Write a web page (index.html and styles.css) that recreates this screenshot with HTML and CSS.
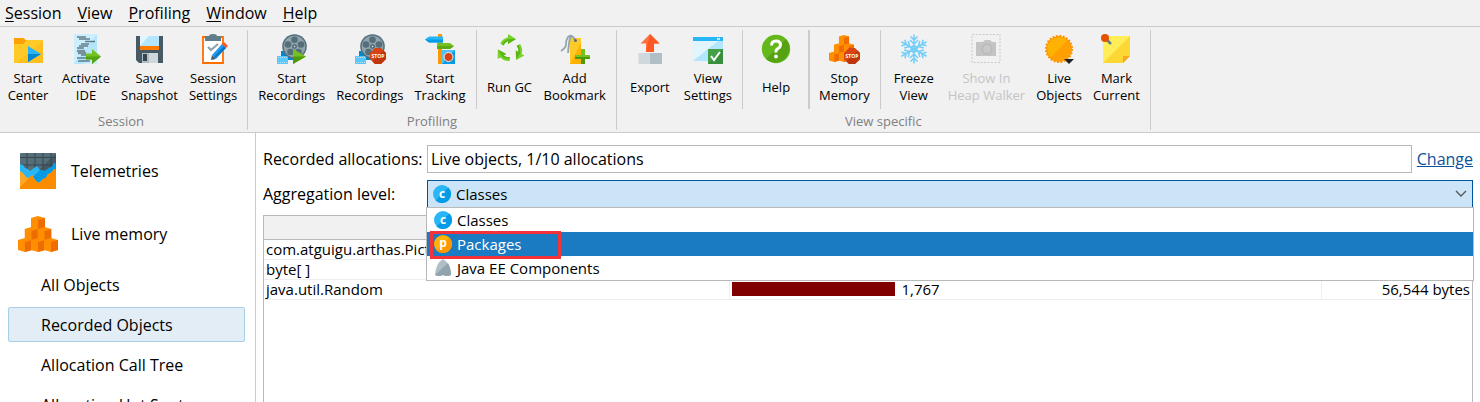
FILE: index.html
```html
<!DOCTYPE html>
<html lang="en">
<head>
<meta charset="utf-8">
<title>Recorded Objects</title>
<link rel="stylesheet" href="styles.css">
</head>
<body>
<svg class="defs" aria-hidden="true">
  <defs>
    <symbol id="reel" viewBox="0 0 30 30">
      <path d="M4 17h12v9H4z" fill="#0288d1"/>
      <path d="M0 22h11v8H0z" fill="#5ac8fa"/>
      <path d="M1 23.500h9M1 28.500h9" stroke="#b3e5fc" stroke-dasharray="1 1"/>
      <circle cx="17.500" cy="12.500" r="12.300" fill="#546e7a"/>
      <circle cx="17.500" cy="12.500" r="10.800" fill="#90a4ae"/>
      <g fill="#546e7a"><circle cx="17.500" cy="5.800" r="3.300"/><circle cx="24" cy="10.500" r="3.300"/><circle cx="21.500" cy="18" r="3.300"/><circle cx="13.500" cy="18" r="3.300"/><circle cx="11" cy="10.500" r="3.300"/></g>
      <circle cx="17.500" cy="12.500" r="2.300" fill="#455a64"/><circle cx="17.500" cy="12.500" r="1" fill="#cfd8dc"/>
    </symbol>
    <symbol id="stop" viewBox="0 0 16 16">
      <path d="M5 0h6l5 5v6l-5 5H5l-5-5V5z" fill="#d84315"/>
      <path d="M16 5v6l-5 5H5l-2.500-2.500L13.500 2.500z" fill="#bf360c"/>
      <text x="8" y="10" text-anchor="middle" class="stop-text">STOP</text>
    </symbol>
    <symbol id="cube" viewBox="0 0 14 14">
      <path d="M7 0l7 2v10l-7 2-7-2V2z" fill="#ff8f00"/>
      <path d="M7 4l7-2v10l-7 2z" fill="#ef6c00"/>
    </symbol>
    <symbol id="cubes" viewBox="0 0 40 36">
      <use href="#cube" x="13" y="0" width="14" height="14"/>
      <use href="#cube" x="6.500" y="11" width="14" height="14"/><use href="#cube" x="19.500" y="11" width="14" height="14"/>
      <use href="#cube" x="0" y="22" width="14" height="14"/><use href="#cube" x="13" y="22" width="14" height="14"/><use href="#cube" x="26" y="22" width="14" height="14"/>
    </symbol>
    <symbol id="class-icon" viewBox="0 0 18 18">
      <circle cx="9" cy="9" r="9" fill="#29b6f6"/><path d="M15.400 2.600A9 9 0 0 1 2.600 15.400z" fill="#039be5"/>
      <text x="9" y="12.500" text-anchor="middle" class="badge-text">c</text>
    </symbol>
    <symbol id="arc" viewBox="0 0 30 30">
      <path d="M5.300 9.500A11.500 11.500 0 0 1 13 3.200V0l8 5-8 5V7a8.500 8.500 0 0 0-4.500 4.500z" fill="#76d22b"/>
      <path d="M13 5h8l-8 5V7q-3 1-4.500 4.500l-1.600-1Q9 6.500 13 5z" fill="#5cb615"/>
    </symbol>
    <g id="flake-arm"><path d="M15 15V0.500M15 6l-3.500-3.500M15 6l3.500-3.500M15 10l-4-4M15 10l4-4"/></g>
  </defs>
</svg>

<nav class="menu" aria-label="Main menu">
  <button><u>S</u>ession</button><button><u>V</u>iew</button><button><u>P</u>rofiling</button><button><u>W</u>indow</button><button><u>H</u>elp</button>
</nav>

<header class="toolbar">
  <section class="group">
    <div class="tools">
      <button class="tool">
        <svg class="icon" viewBox="0 0 30 30"><path d="M1 4h10l2 2h17v23H1z" fill="#ffca28"/><path d="M30 7v22H4z" fill="#ffc01e"/><path d="M1 4h9l3 3-3 3H1z" fill="#ffa000"/><path d="M15 12l13 8-13 8z" fill="#29b6f6"/><path d="M15 20h13l-13 8z" fill="#0288d1"/></svg>
        <span>Start<br>Center</span></button>
      <button class="tool">
        <svg class="icon" viewBox="0 0 30 30"><path d="M3 0h23v30H3z" fill="#cdeefe"/><path d="M26 0v20L12 30H3z" fill="#b3e5fc"/><path d="M6 3h9M8 5h11M14 7.500h10M10 10h8M8 12h9M6 14h7M10 21h7M6 24h9M7 27h12" stroke="#607d8b" stroke-width="1.300"/><path d="M6 17h8M7 19h8" stroke="#78909c" stroke-width="2.500"/><path d="M15 19.500h6V15l9 7.500-9 7.500v-4.500h-6z" fill="#76c122"/><path d="M15 22.500h15L21 30v-4.500h-6z" fill="#55a312"/></svg>
        <span>Activate<br>IDE</span></button>
      <button class="tool">
        <svg class="icon" viewBox="0 0 30 30"><path d="M2 2h27v27H5l-3-3z" fill="#455a64"/><path d="M6 2h19v10H6z" fill="#e1f5fe"/><path d="M15 2h10v10H6z" fill="#b3e5fc"/><path d="M6 12h19v4H6z" fill="#ff7b00"/><path d="M8 19h16v10H8z" fill="#b0bec5"/><path d="M15 19h9v10h-9z" fill="#cfd8dc"/><path d="M9 20h4v7H9z" fill="#37474f"/></svg>
        <span>Save<br>Snapshot</span></button>
      <button class="tool">
        <svg class="icon" viewBox="0 0 30 30"><path d="M5 3h20v26H5z" fill="#fff" stroke="#ff6f00" stroke-width="1.800"/><path d="M7 7V3q0-1 1-1h3q0-2 4-2t4 2h3q1 0 1 1v4z" fill="#607d8b"/><path d="M10 13l3 3 7-6" fill="none" stroke="#90a4ae" stroke-width="2.300"/><path d="M13 26l1-5 4 4z" fill="#455a64"/><path d="M14 21L24 10l4 4-10 11z" fill="#2196f3"/><path d="M17 24l11-10-2-2-10 11z" fill="#0277bd"/><path d="M24 10l2-2 4 4-2 2z" fill="#ff5722"/></svg>
        <span>Session<br>Settings</span></button>
    </div>
    <h2>Session</h2>
  </section>
  <section class="group">
    <div class="tools">
      <button class="tool">
        <svg class="icon" viewBox="0 0 30 30"><use href="#reel" width="30" height="30"/><path d="M16 15l13 7.500L16 30z" fill="#76c122"/><path d="M16 22.500h13L16 30z" fill="#4e9a0a"/></svg>
        <span>Start<br>Recordings</span></button>
      <button class="tool">
        <svg class="icon" viewBox="0 0 30 30"><use href="#reel" width="30" height="30"/><use href="#stop" x="15" y="14" width="16" height="16"/></svg>
        <span>Stop<br>Recordings</span></button>
      <button class="tool">
        <svg class="icon" viewBox="0 0 30 30"><path d="M13 0h4v30h-4z" fill="#ff9800"/><path d="M0 5.500l4-3h14v6H4z" fill="#29b6f6"/><path d="M0 5.500h18v3H4z" fill="#039be5"/><path d="M12 9h13l4 3-4 3H12z" fill="#76c122"/><path d="M12 12h17l-4 3H12z" fill="#5cab14"/><path d="M17 16h13v14H17z" fill="#039be5"/><path d="M17 16h13L17 30z" fill="#4fc3f7"/><circle cx="23.500" cy="23" r="4.500" fill="#d84315" stroke="#eceff1"/></svg>
        <span>Start<br>Tracking</span></button>
      <i class="sep"></i>
      <button class="tool">
        <svg class="icon" viewBox="0 0 30 30"><use href="#arc" width="30" height="30"/><use href="#arc" width="30" height="30" transform="rotate(120 15 15.500)"/><use href="#arc" width="30" height="30" transform="rotate(240 15 15.500)"/></svg>
        <span>Run GC</span></button>
      <button class="tool">
        <svg class="icon" viewBox="0 0 30 30"><path d="M10 4h11v26H10z" fill="#ffca28"/><path d="M21 9v21H10z" fill="#ffb300"/><path d="M16 7Q12-1 8 3 6 6 6 10T1 17M15 7Q13 0 10 4 9 8 8 19" fill="none" stroke="#90a4ae" stroke-width="1.800"/><circle cx="15.500" cy="6.500" r="1.500" fill="#546e7a"/><path d="M21 15h4v6h5v4h-5v5h-4v-5h-6v-4h6z" fill="#76c122"/><path d="M15 23h15v2h-5v5h-4v-5h-6z" fill="#4e9a0a"/></svg>
        <span>Add<br>Bookmark</span></button>
    </div>
    <h2>Profiling</h2>
  </section>
  <section class="group">
    <div class="tools">
      <button class="tool">
        <svg class="icon" viewBox="0 0 30 30"><path d="M3.500 19H27v11H3.500z" fill="#cfd8dc"/><path d="M15 19h12v11H15z" fill="#b0bec5"/><path d="M15 0l9.500 9.500H19V18h-8V9.500H5.500z" fill="#ff7043"/><path d="M15 0l9.500 9.500H19V18h-8z" fill="#ff5722"/></svg>
        <span>Export</span></button>
      <button class="tool">
        <svg class="icon" viewBox="0 0 30 30"><path d="M0 3h30v24H0z" fill="#e1f5fe"/><path d="M30 3v24H0z" fill="#b3e5fc"/><path d="M0 3h30v4H0z" fill="#29b6f6"/><path d="M24 4l3 2M27 4l-3 2" stroke="#e1f5fe"/><path d="M15 15h15v15H15z" fill="#43a047"/><path d="M30 15v15H15z" fill="#388e3c"/><path d="M18 22l3 4 6-8" fill="none" stroke="#fff" stroke-width="2"/></svg>
        <span>View<br>Settings</span></button>
      <i class="sep"></i>
      <button class="tool">
        <svg class="icon" viewBox="0 0 30 30"><circle cx="15" cy="15" r="14.200" fill="#64b81a"/><path d="M25 5A14.200 14.200 0 0 1 5 25z" fill="#55a312"/><path d="M10.500 11.500q0-4.500 4.500-4.500t4.500 4q0 2-2.500 3.500T15 18.500" fill="none" stroke="#fff" stroke-width="3"/><circle cx="15" cy="22.500" r="1.900" fill="#fff"/></svg>
        <span>Help</span></button>
      <i class="sep sep-strong"></i>
      <button class="tool">
        <svg class="icon" viewBox="0 0 30 30"><use href="#cubes" y="1" width="30" height="27"/><use href="#stop" x="15" y="14" width="16" height="16"/></svg>
        <span>Stop<br>Memory</span></button>
      <i class="sep"></i>
      <button class="tool">
        <svg class="icon" viewBox="0 0 30 30"><g fill="none" stroke="#72cdf8" stroke-width="1.500"><use href="#flake-arm"/><use href="#flake-arm" transform="rotate(60 15 15)"/><use href="#flake-arm" transform="rotate(120 15 15)"/><use href="#flake-arm" transform="rotate(180 15 15)"/><use href="#flake-arm" transform="rotate(240 15 15)"/><use href="#flake-arm" transform="rotate(300 15 15)"/><circle cx="15" cy="15" r="3"/></g></svg>
        <span>Freeze<br>View</span></button>
      <button class="tool" disabled>
        <svg class="icon" viewBox="0 0 30 30"><path d="M1 .5h28v28H1z" fill="none" stroke="#c8c8c8" stroke-dasharray="2 1.500"/><path d="M5 8h7l2-2h5l2 2h4v14H5z" fill="#c4c4c4"/><circle cx="16" cy="15" r="5.500" fill="#b9b9b9"/><circle cx="16" cy="15" r="4" fill="#c8c8c8"/></svg>
        <span>Show In<br>Heap Walker</span></button>
      <button class="tool">
        <svg class="icon" viewBox="0 0 30 30"><circle cx="15" cy="15" r="12.800" fill="#ffb300"/><path d="M24 6A12.800 12.800 0 0 1 6 24z" fill="#ffa000"/><circle cx="15" cy="15" r="13" fill="none" stroke="#ff8f00" stroke-width="2.200" stroke-dasharray="1.800 1.600"/><circle cx="15" cy="15" r="12.300" fill="none" stroke="#ff9800"/><path d="M20 25h10l-5 5z" fill="#222"/></svg>
        <span>Live<br>Objects</span></button>
      <button class="tool">
        <svg class="icon" viewBox="0 0 30 30"><path d="M2 2h27v20l-7 7H2z" fill="#ffee58"/><path d="M29 2v20l-7 7H2z" fill="#fdd835"/><path d="M29 22h-7v7z" fill="#f9a825"/><path d="M5 5l5 5" stroke="#607d8b" stroke-width="2.500"/><circle cx="4" cy="4" r="4" fill="#e65100"/></svg>
        <span>Mark<br>Current</span></button>
    </div>
    <h2>View specific</h2>
  </section>
</header>

<div class="body">
  <aside class="sidebar">
    <button class="section">
      <svg class="section-icon" viewBox="0 0 40 36"><rect x="2" width="36" height="36" rx="1" fill="#546e7a"/><path d="M38 0v18H20z" fill="#455a64"/><path d="M2 4.500h36M2 12h36M9 0v18M17 0v18M25 0v18M33 0v18" stroke="#37474f"/><path d="M2 11l3 1 2 3 3 1 2 2 4-3 3-2 3 4 5 1 4-3 3-1 2-4 2 1v20H2z" fill="#29b6f6"/><path d="M38 11v18H10l12-12 5 1 4-3 3-1 2-4z" fill="#039be5"/><path d="M2 18l3 2 3 4 3 1 3-3 3 5 3 3 2-1 3-3 3-1 2-4 3-1 3-4 2 1v19H2z" fill="#ffa726"/><path d="M14 22l3 5 3 3 2-1 3-3 3-1 2-4 3-1 3-4 2 1v19H2v-2z" fill="#fb8c00"/></svg>
      Telemetries</button>
    <button class="section">
      <svg class="section-icon"><use href="#cubes"/></svg>
      Live memory</button>
    <div class="views">
      <button>All Objects</button>
      <button class="current">Recorded Objects</button>
      <button>Allocation Call Tree</button>
      <button>Allocation Hot Spots</button>
    </div>
  </aside>

  <main class="main">
    <div class="form">
      <label for="alloc">Recorded allocations:</label>
      <div class="field-row">
        <input id="alloc" type="text" value="Live objects, 1/10 allocations" readonly>
        <a href="#change">Change</a>
      </div>
      <label for="level">Aggregation level:</label>
      <div class="combo">
        <select id="level"><option>Classes</option><option>Packages</option><option>Java EE Components</option></select>
        <svg class="badge combo-badge"><use href="#class-icon"/></svg>
        <svg class="chevron" viewBox="0 0 12 8"><path d="M1 1l5 5 5-5" fill="none" stroke="#555" stroke-width="1.300"/></svg>
        <div class="popup" role="listbox" aria-label="Aggregation level">
          <button class="option" role="option"><svg class="badge"><use href="#class-icon"/></svg>Classes</button>
          <button class="option active" role="option" aria-selected="true"><svg class="badge" viewBox="0 0 18 18"><circle cx="9" cy="9" r="9" fill="#ffb300"/><path d="M15.400 2.600A9 9 0 0 1 2.600 15.400z" fill="#ff9800"/><text x="9" y="12" text-anchor="middle" class="badge-text">p</text></svg>Packages<i class="marker"></i></button>
          <button class="option" role="option"><svg class="badge" viewBox="0 0 18 18"><path d="M1 16Q2 4 9 0q7 4 8 16-4 2-8 0-4 2-8 0z" fill="#b0bec5"/><path d="M14 4q3 5 3 12-4 2-8 0-4 2-8 0z" fill="#90a4ae"/></svg>Java EE Components</button>
        </div>
      </div>
    </div>
    <div class="grid">
      <table>
        <colgroup><col class="col-name"><col><col class="col-size"></colgroup>
        <thead><tr><th></th><th></th><th></th></tr></thead>
        <tbody>
          <tr><td>com.atguigu.arthas.Picture</td><td></td><td></td></tr>
          <tr><td>byte[ ]</td><td></td><td></td></tr>
          <tr><td>java.util.Random</td><td><div class="count"><i class="bar"></i>1,767</div></td><td class="num">56,544 bytes</td></tr>
        </tbody>
      </table>
    </div>
  </main>
</div>
</body>
</html>
```

FILE: styles.css
```css
* { box-sizing: border-box; }
body {
  margin: 0;
  height: 100vh;
  overflow: hidden;
  display: flex;
  flex-direction: column;
  background: #f1f1f1;
  color: #000;
  font: 15px/20px "Open Sans", "Noto Sans", sans-serif;
}
button { border: 0; margin: 0; padding: 0; background: none; color: inherit; font: inherit; }
.defs { position: absolute; width: 0; height: 0; }

.menu { display: flex; gap: 16px; padding: 3px 5px; border-bottom: 1px solid #cbcbcb; flex: none; font-size: 16px; }
.menu u { text-underline-offset: 2px; }

.toolbar { display: flex; flex: none; height: 106px; padding: 3px 0 2px; border-bottom: 1px solid #cbcbcb; }
.group { display: flex; flex-direction: column; padding: 0 5px; border-right: 1px solid #cbcbcb; }
.group:first-child { padding-left: 0; }
.group h2 { margin: 0; padding-top: 3px; font-size: 13px; line-height: 18px; font-weight: 400; color: #808080; text-align: center; }
.tools { display: flex; gap: 1px; height: 80px; }
.tool { display: flex; flex-direction: column; align-items: center; min-width: 56px; padding: 4px 5px 0; font-size: 13px; line-height: 17px; }
.tool span { display: flex; align-items: center; height: 34px; margin-top: 6px; text-align: center; }
.tool:disabled { color: #c4c4c4; }
.icon { width: 30px; height: 30px; flex: none; overflow: visible; }
.sep { width: 1px; margin: 0 4px; background: #cbcbcb; }
.sep-strong { width: 2px; margin: 0 3px; }
.stop-text { font: 700 5px "Open Sans", sans-serif; fill: #fff; }
.badge-text { font: 700 12px "Open Sans", sans-serif; fill: #fff; }

.body { display: flex; flex: 1; min-height: 0; background: #fff; }
.sidebar { width: 256px; flex: none; padding: 6px 10px 0 8px; border-right: 1px solid #cbcbcb; font-size: 16px; }
.section { display: flex; align-items: center; gap: 13px; width: 100%; height: 63px; padding-left: 10px; }
.section-icon { width: 40px; height: 36px; }
.views { display: flex; flex-direction: column; gap: 5px; padding-top: 2px; }
.views button { height: 35px; padding-left: 32px; text-align: left; border: 1px solid transparent; border-radius: 2px; }
.views .current { background: #e3edf6; border-color: #a9cfe8; }

.main { display: flex; flex-direction: column; flex: 1; min-width: 0; padding: 12px 7px 0; }
.form { display: grid; grid-template-columns: 158px 1fr; gap: 7px 6px; align-items: center; font-size: 16px; }
.form > label { white-space: nowrap; }
.field-row { display: flex; align-items: center; gap: 5px; }
.field-row input { flex: 1; min-width: 0; height: 28px; padding: 0 3px; border: 1px solid #b9b9b9; background: #fff; color: #000; font: inherit; }
.field-row a { color: #0b529c; }
.combo { position: relative; font-size: 15px; }
.combo select { display: block; width: 100%; height: 28px; padding: 0 28px; appearance: none; border: 1px solid #0054a0; border-radius: 0; background: #cce4f7; color: #000; font: inherit; }
.badge { width: 18px; height: 18px; flex: none; }
.combo-badge { position: absolute; left: 6px; top: 5px; }
.chevron { position: absolute; right: 6px; top: 10px; width: 12px; height: 8px; }
.popup { position: absolute; z-index: 1; top: 27px; left: -1px; right: -1px; border: 1px solid #b9b9b9; background: #fff; }
.option { position: relative; display: flex; align-items: center; gap: 5px; width: 100%; height: 24px; padding-left: 7px; }
.option.active { background: #1a7bc3; color: #fff; }
.marker { position: absolute; left: 3px; top: -1px; width: 131px; height: 28px; border: 3px solid #f3323a; }

.grid { flex: 1; min-height: 0; margin-top: 7px; border: 1px solid #b9b9b9; border-bottom: 0; }
table { width: 100%; table-layout: fixed; border-collapse: collapse; }
.col-name { width: 465px; }
.col-size { width: 151px; }
th { height: 23px; padding: 0; background: #f1f1f1; border-bottom: 1px solid #b9b9b9; }
td { height: 20px; padding: 0 2px; line-height: 19px; border-bottom: 1px solid #eee; border-right: 1px solid #eee; }
td:last-child { border-right: 0; }
.num { text-align: right; }
.count { display: flex; align-items: center; gap: 7px; }
.bar { width: 163px; height: 14px; background: #800000; }
```
